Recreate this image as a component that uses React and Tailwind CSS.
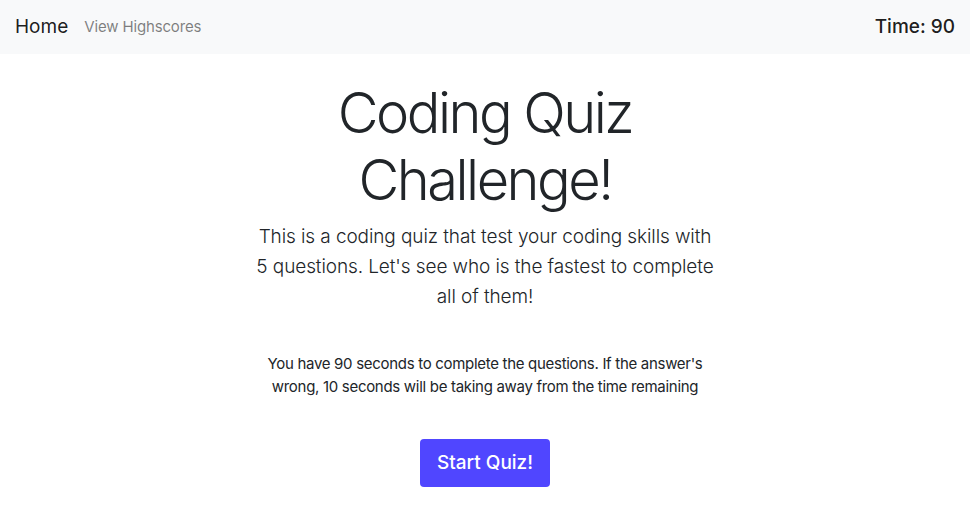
import React from 'react';

const App = () => {
  return (
    <div className="min-h-screen bg-white text-[#212529]" style={{ fontFamily: 'Inter, "Noto Sans", sans-serif' }}>
      <nav className="flex h-[54px] items-center justify-between bg-[#f8f9fa] px-[15px]">
        <div className="flex items-center">
          <a className="mr-4 text-[19px] leading-[30px] text-black/90">Home</a>
          <a className="text-[15px] tracking-[-0.01em] text-black/50">View Highscores</a>
        </div>
        <span className="text-[19px] font-medium text-black/90">Time: 90</span>
      </nav>

      <main className="mx-auto flex w-[480px] flex-col items-center text-center">
        <h1 className="mt-[26px] mb-2 w-[330px] text-[56px] font-light leading-[67px] tracking-[-0.045em]">
          Coding Quiz Challenge!
        </h1>
        <p className="w-[464px] text-[19px] font-light leading-[30px] tracking-[-0.005em]">
          This is a coding quiz that test your coding skills with 5 questions. Let's see who is the fastest to complete all of them!
        </p>
        <p className="mt-10 w-[445px] text-[15px] leading-[23px] tracking-[-0.02em]">
          You have 90 seconds to complete the questions. If the answer's wrong, 10 seconds will be taking away from the time remaining
        </p>
        <button className="mt-[41px] h-12 rounded bg-[#5046ff] px-[17px] text-[19px] font-medium text-white">
          Start Quiz!
        </button>
      </main>
    </div>
  );
};

export default App;
